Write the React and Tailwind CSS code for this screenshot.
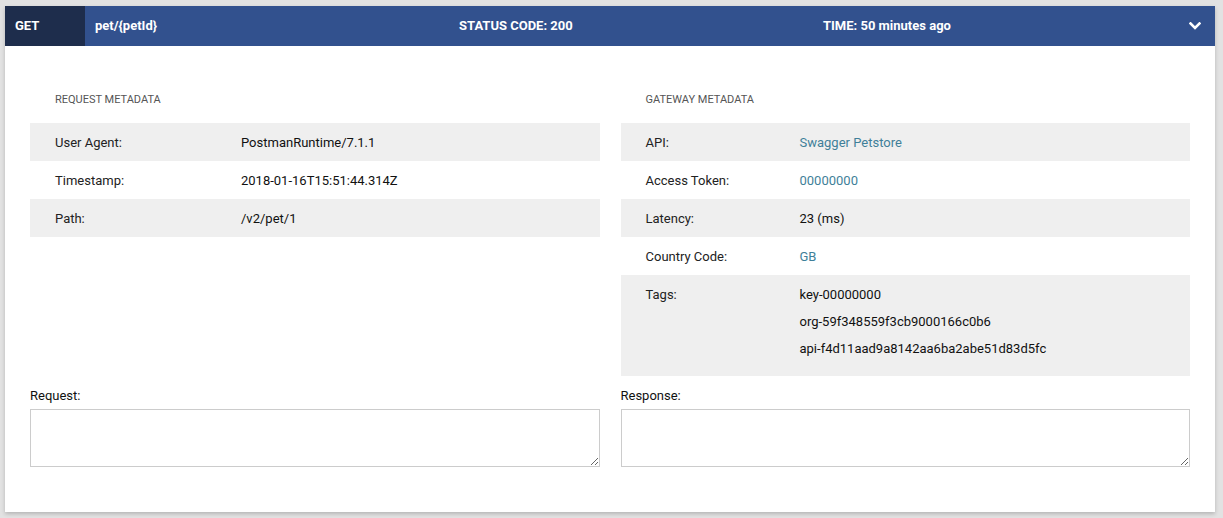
import React from "react";

const font = { fontFamily: "Roboto, 'Liberation Sans', sans-serif" };

function Row({ label, children, gray, labelW }) {
  return (
    <div className={`flex pl-[25px] pt-[11px] pb-[9px] text-[13px] leading-[18px] ${gray ? "bg-[#efefef]" : "bg-white"}`}>
      <div className={`${labelW} shrink-0 text-[#222]`}>{label}</div>
      <div className="text-[#111]">{children}</div>
    </div>
  );
}

export default function App() {
  const link = "text-[#3f7f99]";
  return (
    <div className="min-h-[518px] bg-[#e2e2e2] pt-[6px] pl-[5px] pr-[8px]" style={font}>
      <div className="w-[1210px] bg-white shadow-[0_2px_4px_rgba(0,0,0,0.2)]">
        <div className="flex h-[40px] items-center bg-[#32518e] text-[13px] font-bold text-white">
          <div className="flex h-full w-[80px] items-center bg-[#1e2d4c] pl-[10px]">GET</div>
          <div className="flex flex-1 items-center pl-[10px]">
            <div className="w-[364px]">pet/{"{petId}"}</div>
            <div className="w-[364px]">STATUS CODE: 200</div>
            <div className="w-[364px]">TIME: 50 minutes ago</div>
            <div className="flex flex-1 justify-start pl-[2px]">
              <svg width="12" height="8" viewBox="0 0 12 8">
                <polyline points="1.5,1.5 6,6 10.5,1.5" fill="none" stroke="white" strokeWidth="2.6" strokeLinecap="square" />
              </svg>
            </div>
          </div>
        </div>

        <div className="px-[25px] pb-[45px]">
          <div className="grid grid-cols-2 gap-x-[21px]">
            <div>
              <div className="pl-[25px] pt-[47px] pb-[17px] text-[11px] leading-[13px] text-[#555] uppercase">Request Metadata</div>
              <Row label="User Agent:" gray labelW="w-[186px]">PostmanRuntime/7.1.1</Row>
              <Row label="Timestamp:" labelW="w-[186px]">2018-01-16T15:51:44.314Z</Row>
              <Row label="Path:" gray labelW="w-[186px]">/v2/pet/1</Row>
            </div>
            <div>
              <div className="pl-[25px] pt-[47px] pb-[17px] text-[11px] leading-[13px] text-[#555] uppercase">Gateway Metadata</div>
              <Row label="API:" gray labelW="w-[154px]"><span className={link}>Swagger Petstore</span></Row>
              <Row label="Access Token:" labelW="w-[154px]"><span className={link}>00000000</span></Row>
              <Row label="Latency:" gray labelW="w-[154px]">23 (ms)</Row>
              <Row label="Country Code:" labelW="w-[154px]"><span className={link}>GB</span></Row>
              <div className="flex bg-[#efefef] pl-[25px] pt-[11px] pb-[9px] text-[13px] leading-[18px]">
                <div className="w-[154px] shrink-0 text-[#222]">Tags:</div>
                <div className="flex flex-col gap-[9px] pb-[9px] text-[#111]">
                  <div>key-00000000</div>
                  <div>org-59f348559f3cb9000166c0b6</div>
                  <div>api-f4d11aad9a8142aa6ba2abe51d83d5fc</div>
                </div>
              </div>
            </div>
          </div>

          <div className="mt-[11px] grid grid-cols-2 gap-x-[21px]">
            <div>
              <div className="mb-[5px] pt-[1px] text-[13px] leading-[16px] text-[#111]">Request:</div>
              <textarea className="block h-[58px] w-full border border-[#cccccc] bg-white outline-none" />
            </div>
            <div>
              <div className="mb-[5px] pt-[1px] text-[13px] leading-[16px] text-[#111]">Response:</div>
              <textarea className="block h-[58px] w-full border border-[#cccccc] bg-white outline-none" />
            </div>
          </div>
        </div>
      </div>
    </div>
  );
}
